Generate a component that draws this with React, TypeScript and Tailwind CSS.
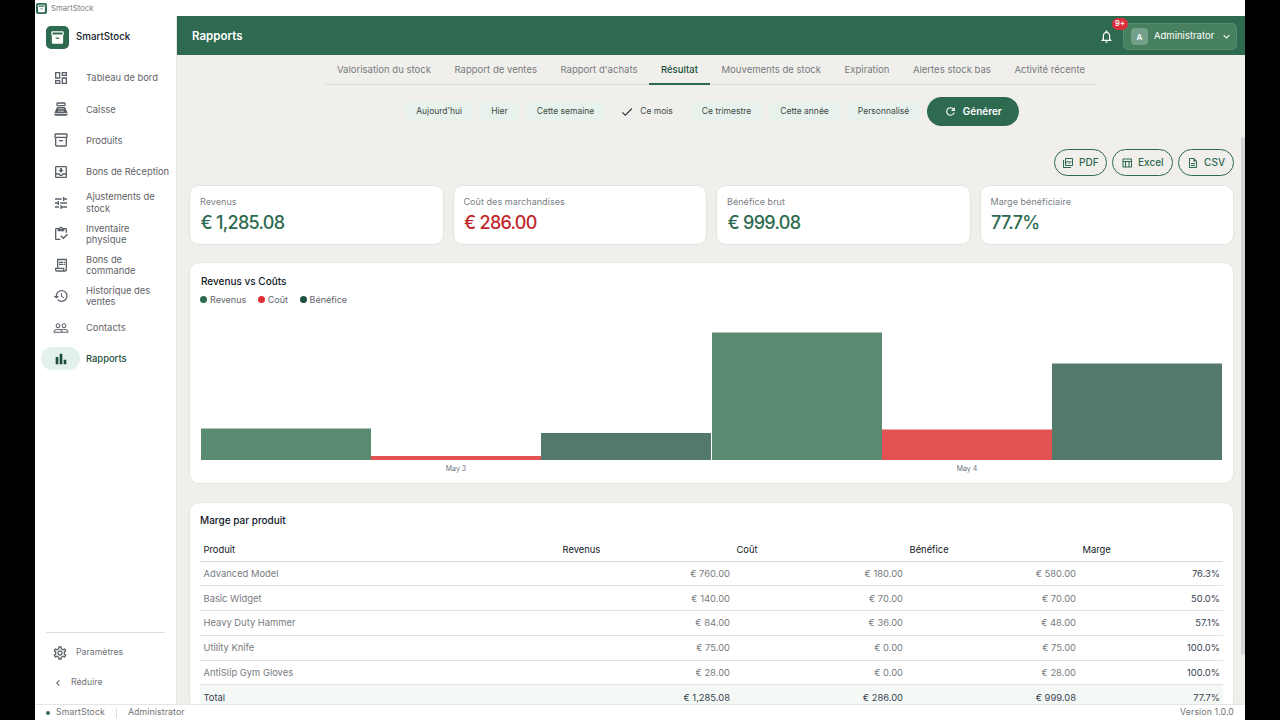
import React from "react";
import {
  MdOutlineDashboard, MdOutlinePointOfSale, MdOutlineInventory2, MdOutlineMoveToInbox, MdOutlineTune,
  MdOutlineInventory, MdOutlineReceiptLong, MdHistory, MdPeopleOutline, MdBarChart, MdOutlineSettings,
  MdChevronLeft, MdOutlineNotifications, MdExpandMore, MdCheck, MdRefresh, MdOutlinePictureAsPdf,
  MdOutlineTableChart, MdOutlineDescription, MdInventory2,
} from "react-icons/md";

const nav = [
  [MdOutlineDashboard, "Tableau de bord"],
  [MdOutlinePointOfSale, "Caisse"],
  [MdOutlineInventory2, "Produits"],
  [MdOutlineMoveToInbox, "Bons de Réception"],
  [MdOutlineTune, "Ajustements de\nstock"],
  [MdOutlineInventory, "Inventaire\nphysique"],
  [MdOutlineReceiptLong, "Bons de\ncommande"],
  [MdHistory, "Historique des\nventes"],
  [MdPeopleOutline, "Contacts"],
  [MdBarChart, "Rapports"],
] as const;

const tabs = ["Valorisation du stock", "Rapport de ventes", "Rapport d'achats", "Résultat", "Mouvements de stock", "Expiration", "Alertes stock bas", "Activité récente"];
const chips = ["Aujourd'hui", "Hier", "Cette semaine", "Ce mois", "Ce trimestre", "Cette année", "Personnalisé"];
const rows = [
  ["Advanced Model", "€ 760.00", "€ 180.00", "€ 580.00", "76.3%"],
  ["Basic Widget", "€ 140.00", "€ 70.00", "€ 70.00", "50.0%"],
  ["Heavy Duty Hammer", "€ 84.00", "€ 36.00", "€ 48.00", "57.1%"],
  ["Utility Knife", "€ 75.00", "€ 0.00", "€ 75.00", "100.0%"],
  ["AntiSlip Gym Gloves", "€ 28.00", "€ 0.00", "€ 28.00", "100.0%"],
];

function Stat({ label, value, red }: { label: string; value: string; red?: boolean }) {
  return (
    <div className="flex-1 h-[60px] bg-white rounded-[10px] border border-[#e4e4e2] pl-[10px] pt-[9px]">
      <div className="text-[9px] leading-[13px] text-[#7b7f86] tracking-[0.05px]">{label}</div>
      <div className={`text-[18px] leading-[26px] mt-[2px] ml-[0.5px] font-medium tracking-[-0.7px] ${red ? "text-[#c1272d]" : "text-[#2d6a4f]"}`}>{value}</div>
    </div>
  );
}

function Legend({ color, label }: { color: string; label: string }) {
  return (
    <div className="flex items-center gap-[3px]">
      <span className={`w-[7px] h-[7px] rounded-full ${color}`} />
      <span className="text-[9px] text-[#5f6368]">{label}</span>
    </div>
  );
}

function ExportBtn({ icon: Icon, label, narrow }: { icon: React.ComponentType<{ size?: number }>; label: string; narrow?: boolean }) {
  return (
    <button className={`h-[27px] flex items-center gap-[5px] rounded-full border border-[#2d6a4f] text-[#2d6a4f] text-[10px] font-medium ${narrow ? "px-[7px]" : "px-[8px]"}`}>
      <Icon size={12} />
      {label}
    </button>
  );
}

export default function App() {
  return (
    <div className="w-[1280px] h-[720px] bg-black px-[35px] overflow-hidden" style={{ fontFamily: "Inter, sans-serif" }}>
      <div className="w-[1210px] h-[720px] bg-white flex flex-col overflow-hidden">
        <div className="h-[16px] flex items-center gap-[4px] shrink-0 pl-[1px] pt-[1px]">
          <span className="w-[11px] h-[11px] bg-[#2d6a4f] rounded-[2px] flex items-center justify-center text-white"><MdInventory2 size={9} /></span>
          <span className="text-[7.75px] text-[#7b7f86]">SmartStock</span>
        </div>
        <div className="flex-1 flex min-h-0">
          <aside className="w-[142px] shrink-0 border-r border-[#e5e5e3] flex flex-col">
            <div className="flex items-center gap-[7px] pl-[11px] h-[40px] shrink-0 pt-[2px]">
              <span className="w-[23px] h-[23px] rounded-[5px] bg-[#2d6a4f] flex items-center justify-center text-white"><MdInventory2 size={15} /></span>
              <span className="text-[9.75px] font-medium text-[#111827]">SmartStock</span>
            </div>
            <nav className="flex flex-col mt-[6.5px]">
              {nav.map(([Icon, label]) => {
                const active = label === "Rapports";
                return (
                  <div key={label} className="h-[31.2px] flex items-center pl-[6px]">
                    <span className={`w-[39px] h-[23px] rounded-full flex items-center justify-center shrink-0 ${active ? "bg-[#e3f1ea] text-[#1b4d3a]" : "text-[#5b6068]"}`}>
                      <Icon size={16} />
                    </span>
                    <span className={`ml-[6px] text-[9.4px] leading-[11.5px] whitespace-pre-line ${active ? "font-medium text-[#1b4d3a]" : "text-[#5f6368]"}`}>{label}</span>
                  </div>
                );
              })}
            </nav>
            <div className="mt-auto">
              <div className="mx-[11px] border-t border-[#dfdfdd]" />
              <div className="h-[40px] flex items-center pl-[17px] gap-[8px] text-[#5f6368]">
                <MdOutlineSettings size={16} />
                <span className="text-[8.75px] text-[#6f7378]">Paramètres</span>
              </div>
              <div className="h-[20px] mb-[11px] flex items-center pl-[17px] gap-[7px] text-[#5f6368]">
                <MdChevronLeft size={12} />
                <span className="text-[8.75px] text-[#6f7378]">Réduire</span>
              </div>
            </div>
          </aside>
          <main className="flex-1 flex flex-col min-w-0 bg-[#f0efeb]">
            <header className="h-[39px] bg-[#2d6a4f] flex items-center pl-[15px] pr-[8px] pt-[2px] shrink-0 text-white">
              <span className="text-[11.5px] font-semibold">Rapports</span>
              <div className="ml-auto relative mr-[9px] flex">
                <MdOutlineNotifications size={15} />
                <span className="absolute -top-[11px] left-[13px] h-[12px] w-[16px] justify-center rounded-full bg-[#dc2f3c] text-white text-[7.5px] font-semibold flex items-center">9+</span>
              </div>
              <div className="w-[114px] h-[27px] rounded-[5px] bg-[#47805f] border border-[#5a8c70] flex items-center pl-[7px] gap-[6px]">
                <span className="w-[17px] h-[17px] rounded-[4px] bg-[#73a088] text-[8px] font-semibold flex items-center justify-center">A</span>
                <span className="text-[9.5px]">Administrator</span>
                <MdExpandMore size={13} />
              </div>
            </header>
            <div className="flex-1 min-h-0 relative">
              <div className="h-full overflow-hidden">
                <div className="w-fit mx-auto flex border-b border-[#dcdcd8] h-[30px]">
                  {tabs.map((t) => {
                    const active = t === "Résultat";
                    return (
                      <div key={t} className={`px-[11.75px] pt-[8px] text-[9.5px] tracking-[0.02px] h-[30px] ${active ? "border-b-2 border-[#2d6a4f] text-[#1b4d3a] font-medium" : "text-[#777b80]"}`}>{t}</div>
                    );
                  })}
                </div>
                <div className="flex justify-center items-center gap-[7px] mt-[12px] h-[29px] pl-[2px]">
                  {chips.map((c) => {
                    const active = c === "Ce mois";
                    return (
                      <div key={c} className={`h-[19px] rounded-[5px] flex items-center gap-[6px] text-[8.5px] text-[#414a46] ${active ? "pl-[8px] pr-[11px]" : "px-[11px] bg-[#e8f2ec]"}`}>
                        {active && <MdCheck size={14} className="text-[#1f2937]" />}
                        {c}
                      </div>
                    );
                  })}
                  <button className="h-[29px] w-[92px] -ml-[0.5px] rounded-full bg-[#2d6a4f] text-white text-[10px] font-semibold flex items-center justify-center gap-[6px]">
                    <MdRefresh size={13} />
                    Générer
                  </button>
                </div>
                <div className="pl-[12px] pr-[11px]">
                  <div className="flex justify-end gap-[5.5px] mt-[23px]">
                    <ExportBtn icon={MdOutlinePictureAsPdf} label="PDF" narrow />
                    <ExportBtn icon={MdOutlineTableChart} label="Excel" />
                    <ExportBtn icon={MdOutlineDescription} label="CSV" />
                  </div>
                  <div className="flex gap-[9px] mt-[9px]">
                    <Stat label="Revenus" value="€ 1,285.08" />
                    <Stat label="Coût des marchandises" value="€ 286.00" red />
                    <Stat label="Bénéfice brut" value="€ 999.08" />
                    <Stat label="Marge bénéficiaire" value="77.7%" />
                  </div>
                  <div className="mt-[17px] h-[222px] bg-white rounded-[10px] border border-[#e4e4e2] px-[11px] pt-[12px]">
                    <div className="text-[10px] leading-[13px] font-medium text-[#111827]">Revenus vs Coûts</div>
                    <div className="flex gap-[11.5px] mt-[5px] -ml-[1px]">
                      <Legend color="bg-[#2d6a4f]" label="Revenus" />
                      <Legend color="bg-[#dc2f35]" label="Coût" />
                      <Legend color="bg-[#1f5040]" label="Bénéfice" />
                    </div>
                    <svg width="1022" height="165" className="mt-[3px] block">
                      <rect x="0" y="118.5" width="170" height="31.5" fill="#5a8a72" />
                      <rect x="170" y="146" width="170" height="4" fill="#e35252" />
                      <rect x="340" y="123" width="170" height="27" fill="#52796a" />
                      <rect x="511" y="22.5" width="170" height="127.5" fill="#5a8a72" />
                      <rect x="681" y="119.5" width="170" height="30.5" fill="#e35252" />
                      <rect x="851" y="53.5" width="170" height="96.5" fill="#52796a" />
                      <text x="255" y="161" textAnchor="middle" fontSize="7" fill="#6b7280">May 3</text>
                      <text x="766" y="161" textAnchor="middle" fontSize="7" fill="#6b7280">May 4</text>
                    </svg>
                  </div>
                  <div className="mt-[18px] bg-white rounded-[10px] border border-[#e4e4e2] px-[10px] pt-[11px]">
                    <div className="text-[10px] leading-[13px] font-medium text-[#111827]">Marge par produit</div>
                    <table className="w-[1023px] mt-[11px] table-fixed text-[9.4px]">
                      <colgroup>
                        <col className="w-[359px]" />
                        <col className="w-[174px]" />
                        <col className="w-[173px]" />
                        <col className="w-[173px]" />
                        <col className="w-[144px]" />
                      </colgroup>
                      <thead>
                        <tr className="h-[23px] border-b border-[#d8d8d6] text-[#111827]">
                          {["Produit", "Revenus", "Coût", "Bénéfice", "Marge"].map((h) => (
                            <th key={h} className="text-left font-normal px-[3.5px] pt-[1px]">{h}</th>
                          ))}
                        </tr>
                      </thead>
                      <tbody>
                        {rows.map((r) => (
                          <tr key={r[0]} className="h-[24.8px] border-b border-[#e2e2e0] text-[#777b80]">
                            <td className="px-[3.5px] pt-[1px]">{r[0]}</td>
                            <td className="px-[3px] pt-[1px] text-right">{r[1]}</td>
                            <td className="px-[3px] pt-[1px] text-right">{r[2]}</td>
                            <td className="px-[3px] pt-[1px] text-right">{r[3]}</td>
                            <td className="px-[3px] pt-[1px] text-right text-[#374151]">{r[4]}</td>
                          </tr>
                        ))}
                        <tr className="h-[25px] bg-[#f4f9f6] text-[#374151]">
                          <td className="px-[3.5px] pt-[1px]">Total</td>
                          <td className="px-[3px] pt-[1px] text-right">€ 1,285.08</td>
                          <td className="px-[3px] pt-[1px] text-right">€ 286.00</td>
                          <td className="px-[3px] pt-[1px] text-right">€ 999.08</td>
                          <td className="px-[3px] pt-[1px] text-right">77.7%</td>
                        </tr>
                      </tbody>
                    </table>
                  </div>
                </div>
              </div>
              <div className="absolute right-0 top-[82px] h-[518px] w-[4px] rounded-full bg-[#d4d5d6]" />
            </div>
          </main>
        </div>
        <footer className="h-[16px] shrink-0 border-t border-[#e5e5e3] flex items-center text-[8.75px] text-[#6f7378] tracking-[0.1px] pl-[11px] pr-[11px]">
          <span className="w-[4px] h-[4px] rounded-full bg-[#2d6a4f]" />
          <span className="ml-[6px]">SmartStock</span>
          <span className="mx-[11px] h-[10px] border-l border-[#dcdcda]" />
          <span>Administrator</span>
          <span className="ml-auto">Version 1.0.0</span>
        </footer>
      </div>
    </div>
  );
}
